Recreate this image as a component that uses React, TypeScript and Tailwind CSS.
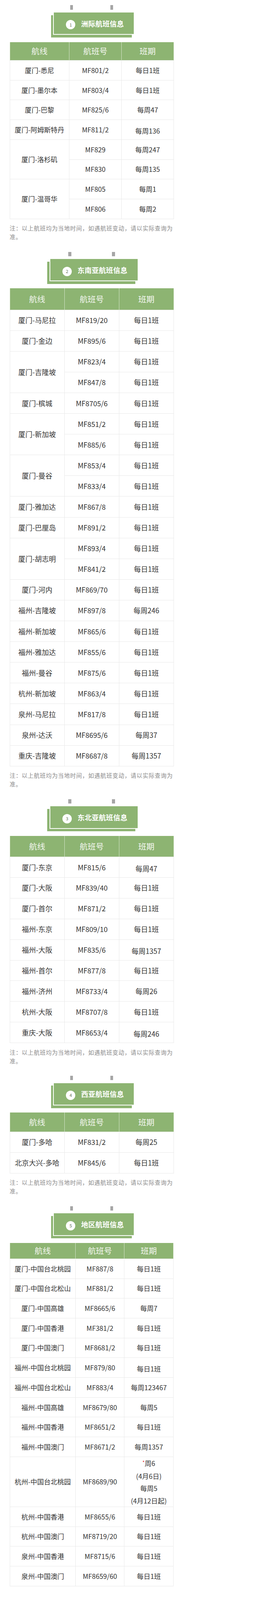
import type { FunctionComponent, ReactNode } from 'react';

type Row = {
  route?: string;
  span?: number;
  no: string;
  freq: ReactNode;
  low?: boolean;
  h?: string;
};

interface SectionProps {
  num: number;
  title: string;
  wide?: boolean;
  cols: [string, string, string];
  tableW: string;
  headH: string;
  rowH: string;
  textSize: string;
  rows: Row[];
  note?: boolean;
  first?: boolean;
}

const GREEN = 'bg-[#8db472]';

const SectionTitle: FunctionComponent<{ num: number; title: string; wide?: boolean }> = ({ num, title, wide }) => {
  return (
    <div className={wide ? 'ml-[126.7px] w-[226px]' : 'ml-[136px] w-[207.3px]'}>
      <div className="flex h-[11.3px]">
        <div className={`h-full w-[7.3px] bg-[#a6a6a6] ${wide ? 'ml-[48.7px]' : 'ml-[44px]'}`} />
        <div className={`h-full w-[7.3px] bg-[#a6a6a6] ${wide ? 'ml-[104.7px]' : 'ml-[95.3px]'}`} />
      </div>
      <div className="relative mt-[7.3px] h-[57.3px]">
        <div className={`absolute left-[-5.3px] top-[6.7px] h-full w-full ${GREEN}`} />
        <div className={`relative flex h-full items-start border-b-2 border-l-2 border-white pl-[31.3px] pt-[18.7px] ${GREEN}`}>
          <div className="mt-[0.7px] flex h-[24px] w-[24px] items-center justify-center rounded-full bg-white text-[11.3px] leading-none text-[#5f7352]">
            {num}
          </div>
          <div className="ml-[14.7px] text-[18px] font-bold leading-[18px] tracking-[0.3px] text-white">{title}</div>
        </div>
      </div>
    </div>
  );
};

const Section: FunctionComponent<SectionProps> = ({ num, title, wide, cols, tableW, headH, rowH, textSize, rows, note, first }) => {
  return (
    <section className={first ? 'pt-[13.3px]' : 'mt-[27.3px]'}>
      <SectionTitle num={num} title={title} wide={wide} />
      <table className={`ml-[24.7px] table-fixed border-collapse ${first ? 'mt-[18.7px]' : 'mt-[18px]'} ${tableW}`}>
        <colgroup>
          <col className={cols[0]} />
          <col className={cols[1]} />
          <col className={cols[2]} />
        </colgroup>
        <thead>
          <tr className={headH}>
            {['航线', '航班号', '班期'].map((h) => (
              <th key={h} className={`border-x-[0.67px] border-[#d6e4cb] text-[20.7px] font-normal text-[#f3f6ef] ${GREEN}`}>
                {h}
              </th>
            ))}
          </tr>
        </thead>
        <tbody className={`${textSize} text-[#333]`}>
          {rows.map((r, i) => (
            <tr key={i} className={r.h ?? rowH}>
              {r.route && (
                <td rowSpan={r.span ?? 1} className="border-[0.67px] border-[#e9e9e9] text-center">
                  {r.route}
                </td>
              )}
              <td className="border-[0.67px] border-[#e9e9e9] text-center">{r.no}</td>
              <td className={`border-[0.67px] border-[#e9e9e9] text-center ${r.low ? 'pt-[6.7px]' : ''}`}>{r.freq}</td>
            </tr>
          ))}
        </tbody>
      </table>
      {note && (
        <p className="ml-[24.7px] mt-[12.7px] w-[420px] text-[14.67px] leading-[22px] tracking-[0.85px] text-[#8a8a8a]">
          注：以上航班均为当地时间，如遇航班变动，请以实际查询为准。
        </p>
      )}
    </section>
  );
};

const D = '每日1班';

const intercontinental: Row[] = [
  { route: '厦门-悉尼', no: 'MF801/2', freq: D },
  { route: '厦门-墨尔本', no: 'MF803/4', freq: D },
  { route: '厦门-巴黎', no: 'MF825/6', freq: '每周47' },
  { route: '厦门-阿姆斯特丹', no: 'MF811/2', freq: '每周136', low: true },
  { route: '厦门-洛杉矶', span: 2, no: 'MF829', freq: '每周247' },
  { no: 'MF830', freq: '每周135' },
  { route: '厦门-温哥华', span: 2, no: 'MF805', freq: '每周1' },
  { no: 'MF806', freq: '每周2' },
];

const southeastAsia: Row[] = [
  { route: '厦门-马尼拉', no: 'MF819/20', freq: D },
  { route: '厦门-金边', no: 'MF895/6', freq: D },
  { route: '厦门-吉隆坡', span: 2, no: 'MF823/4', freq: D },
  { no: 'MF847/8', freq: D },
  { route: '厦门-槟城', no: 'MF8705/6', freq: D },
  { route: '厦门-新加坡', span: 2, no: 'MF851/2', freq: D },
  { no: 'MF885/6', freq: D },
  { route: '厦门-曼谷', span: 2, no: 'MF853/4', freq: D },
  { no: 'MF833/4', freq: D },
  { route: '厦门-雅加达', no: 'MF867/8', freq: D },
  { route: '厦门-巴厘岛', no: 'MF891/2', freq: D },
  { route: '厦门-胡志明', span: 2, no: 'MF893/4', freq: D },
  { no: 'MF841/2', freq: D },
  { route: '厦门-河内', no: 'MF869/70', freq: D },
  { route: '福州-吉隆坡', no: 'MF897/8', freq: '每周246' },
  { route: '福州-新加坡', no: 'MF865/6', freq: D },
  { route: '福州-雅加达', no: 'MF855/6', freq: D },
  { route: '福州-曼谷', no: 'MF875/6', freq: D },
  { route: '杭州-新加坡', no: 'MF863/4', freq: D },
  { route: '泉州-马尼拉', no: 'MF817/8', freq: D },
  { route: '泉州-达沃', no: 'MF8695/6', freq: '每周37' },
  { route: '重庆-吉隆坡', no: 'MF8687/8', freq: '每周1357' },
];

const northeastAsia: Row[] = [
  { route: '厦门-东京', no: 'MF815/6', freq: '每周47', low: true },
  { route: '厦门-大阪', no: 'MF839/40', freq: D },
  { route: '厦门-首尔', no: 'MF871/2', freq: D },
  { route: '福州-东京', no: 'MF809/10', freq: D },
  { route: '福州-大阪', no: 'MF835/6', freq: '每周1357', low: true },
  { route: '福州-首尔', no: 'MF877/8', freq: D },
  { route: '福州-济州', no: 'MF8733/4', freq: '每周26' },
  { route: '杭州-大阪', no: 'MF8707/8', freq: D },
  { route: '重庆-大阪', no: 'MF8653/4', freq: '每周246', low: true },
];

const westAsia: Row[] = [
  { route: '厦门-多哈', no: 'MF831/2', freq: '每周25' },
  { route: '北京大兴-多哈', no: 'MF845/6', freq: D },
];

const regional: Row[] = [
  { route: '厦门-中国台北桃园', no: 'MF887/8', freq: D },
  { route: '厦门-中国台北松山', no: 'MF881/2', freq: D },
  { route: '厦门-中国高雄', no: 'MF8665/6', freq: '每周7' },
  { route: '厦门-中国香港', no: 'MF381/2', freq: D },
  { route: '厦门-中国澳门', no: 'MF8681/2', freq: D },
  { route: '福州-中国台北桃园', no: 'MF879/80', freq: D, low: true },
  { route: '福州-中国台北松山', no: 'MF883/4', freq: '每周123467' },
  { route: '福州-中国高雄', no: 'MF8679/80', freq: '每周5' },
  { route: '福州-中国香港', no: 'MF8651/2', freq: D },
  { route: '福州-中国澳门', no: 'MF8671/2', freq: '每周1357' },
  {
    route: '杭州-中国台北桃园',
    no: 'MF8689/90',
    h: 'h-[127.3px]',
    freq: (
      <div className="flex flex-col items-center leading-[31.3px]">
        <span>
          <span className="relative top-[-4px] text-[12px] text-[#e02424]">*</span>周6
        </span>
        <span>(4月6日)</span>
        <span>每周5</span>
        <span>(4月12日起)</span>
      </div>
    ),
  },
  { route: '杭州-中国香港', no: 'MF8655/6', freq: D },
  { route: '杭州-中国澳门', no: 'MF8719/20', freq: D },
  { route: '泉州-中国香港', no: 'MF8715/6', freq: D },
  { route: '泉州-中国澳门', no: 'MF8659/60', freq: D },
];

const App: FunctionComponent = () => {
  return (
    <div className="h-[4078px] w-full overflow-hidden bg-white font-['Noto_Sans_CJK_SC','Liberation_Sans',sans-serif]">
      <Section
        first
        num={1}
        title="洲际航班信息"
        cols={['w-[152px]', 'w-[134.7px]', 'w-[133.3px]']}
        tableW="w-[420px]"
        headH="h-[46.7px]"
        rowH="h-[50.7px]"
        textSize="text-[17.3px]"
        rows={intercontinental}
        note
      />
      <Section
        wide
        num={2}
        title="东南亚航班信息"
        cols={['w-[140px]', 'w-[140px]', 'w-[140px]']}
        tableW="w-[420px]"
        headH="h-[54.7px]"
        rowH="h-[53.1px]"
        textSize="text-[18px]"
        rows={southeastAsia}
        note
      />
      <Section
        wide
        num={3}
        title="东北亚航班信息"
        cols={['w-[140px]', 'w-[140px]', 'w-[140px]']}
        tableW="w-[420px]"
        headH="h-[54px]"
        rowH="h-[52.9px]"
        textSize="text-[18px]"
        rows={northeastAsia}
        note
      />
      <Section
        num={4}
        title="西亚航班信息"
        cols={['w-[140px]', 'w-[140px]', 'w-[140px]']}
        tableW="w-[420px]"
        headH="h-[49.3px]"
        rowH="h-[53px]"
        textSize="text-[18px]"
        rows={westAsia}
        note
      />
      <Section
        num={5}
        title="地区航班信息"
        cols={['w-[168.7px]', 'w-[124.7px]', 'w-[126px]']}
        tableW="w-[419.3px]"
        headH="h-[40.7px]"
        rowH="h-[50.7px]"
        textSize="text-[17.3px]"
        rows={regional}
      />
    </div>
  );
};

export default App;
